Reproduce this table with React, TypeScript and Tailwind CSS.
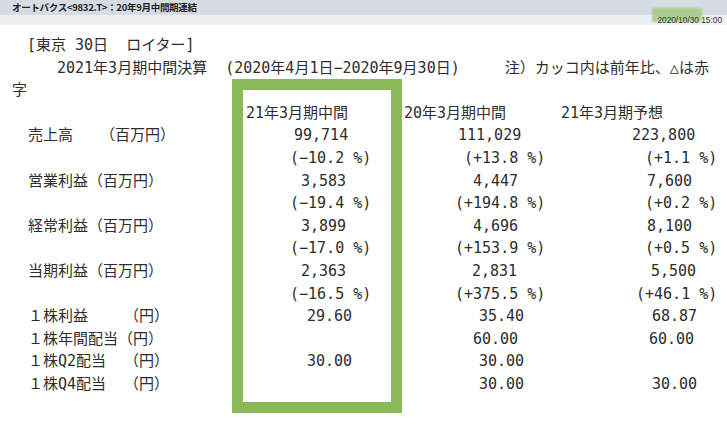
type Cell = { text: string; pad: string }

type Row = {
  label: string
  cells: (Cell | null)[]
}

const rows: Row[] = [
  {
    label: '売上高   （百万円）',
    cells: [
      { text: '99,714', pad: 'pl-[48px]' },
      { text: '111,029', pad: 'pl-[54px]' },
      { text: '223,800', pad: 'pl-[71px]' },
    ],
  },
  {
    label: '',
    cells: [
      { text: '(−10.2 %)', pad: 'pl-[44px]' },
      { text: '(+13.8 %)', pad: 'pl-[60px]' },
      { text: '(+1.1 %)', pad: 'pl-[84px]' },
    ],
  },
  {
    label: '営業利益（百万円）',
    cells: [
      { text: '3,583', pad: 'pl-[55px]' },
      { text: '4,447', pad: 'pl-[69px]' },
      { text: '7,600', pad: 'pl-[86px]' },
    ],
  },
  {
    label: '',
    cells: [
      { text: '(−19.4 %)', pad: 'pl-[44px]' },
      { text: '(+194.8 %)', pad: 'pl-[51px]' },
      { text: '(+0.2 %)', pad: 'pl-[84px]' },
    ],
  },
  {
    label: '経常利益（百万円）',
    cells: [
      { text: '3,899', pad: 'pl-[55px]' },
      { text: '4,696', pad: 'pl-[69px]' },
      { text: '8,100', pad: 'pl-[86px]' },
    ],
  },
  {
    label: '',
    cells: [
      { text: '(−17.0 %)', pad: 'pl-[44px]' },
      { text: '(+153.9 %)', pad: 'pl-[51px]' },
      { text: '(+0.5 %)', pad: 'pl-[84px]' },
    ],
  },
  {
    label: '当期利益（百万円）',
    cells: [
      { text: '2,363', pad: 'pl-[55px]' },
      { text: '2,831', pad: 'pl-[68px]' },
      { text: '5,500', pad: 'pl-[90px]' },
    ],
  },
  {
    label: '',
    cells: [
      { text: '(−16.5 %)', pad: 'pl-[44px]' },
      { text: '(+375.5 %)', pad: 'pl-[51px]' },
      { text: '(+46.1 %)', pad: 'pl-[75px]' },
    ],
  },
  {
    label: '１株利益    （円）',
    cells: [
      { text: '29.60', pad: 'pl-[61px]' },
      { text: '35.40', pad: 'pl-[75px]' },
      { text: '68.87', pad: 'pl-[91px]' },
    ],
  },
  {
    label: '１株年間配当（円）',
    cells: [
      null,
      { text: '60.00', pad: 'pl-[69px]' },
      { text: '60.00', pad: 'pl-[88px]' },
    ],
  },
  {
    label: '１株Q2配当  （円）',
    cells: [
      { text: '30.00', pad: 'pl-[61px]' },
      { text: '30.00', pad: 'pl-[75px]' },
      null,
    ],
  },
  {
    label: '１株Q4配当  （円）',
    cells: [
      null,
      { text: '30.00', pad: 'pl-[75px]' },
      { text: '30.00', pad: 'pl-[91px]' },
    ],
  },
]

const grid = 'grid grid-cols-[234px_158px_157px_1fr]'

export default function App() {
  return (
    <div className="relative w-[727px] h-[434px] overflow-hidden bg-white">
      {/* Header */}
      <div className="flex h-[15px] items-center bg-[#d6dbe4] pl-[12px]">
        <span className="font-['Noto_Sans_CJK_JP',sans-serif] text-[9.5px] font-bold leading-none tracking-[-0.3px] text-[#1e1e1e]">
          オートバクス&lt;9832.T&gt;：20年9月中間期連結
        </span>
      </div>
      <div className="flex h-[10px] items-center justify-end bg-[#eef0f4] pr-[5px]">
        <span className="relative z-10 font-['Liberation_Sans',sans-serif] text-[8.3px] leading-none text-[#333]">
          2020/10/30 15:00
        </span>
      </div>
      <div className="absolute left-[652px] top-[8px] h-[14px] w-[50px] rounded-[2px] bg-[#9cc979]/80 blur-[1px]" />

      {/* Body */}
      <div className="whitespace-pre pl-[12px] pt-[9px] font-['DejaVu_Sans_Mono','Noto_Sans_CJK_JP',monospace] text-[15px] leading-[22.6px] text-[#2d2d2d]">
        <div>{'　[東京 30日  ロイター]'}</div>
        <div>{'　　　2021年3月期中間決算  (2020年4月1日−2020年9月30日)     注）カッコ内は前年比、△は赤'}</div>
        <div>字</div>

        <div className={grid}>
          <div />
          <div>21年3月期中間</div>
          <div>20年3月期中間</div>
          <div>21年3月期予想</div>
        </div>

        {rows.map((row, i) => (
          <div key={i} className={grid}>
            <div className="pl-[16px]">{row.label}</div>
            {row.cells.map((c, j) => (
              <div key={j} className={c ? c.pad : ''}>
                {c ? c.text : ''}
              </div>
            ))}
          </div>
        ))}
      </div>

      {/* Highlight frame */}
      <div className="absolute left-[232px] top-[79px] h-[334px] w-[170px] border-[11px] border-[#8aba57]" />
    </div>
  )
}
